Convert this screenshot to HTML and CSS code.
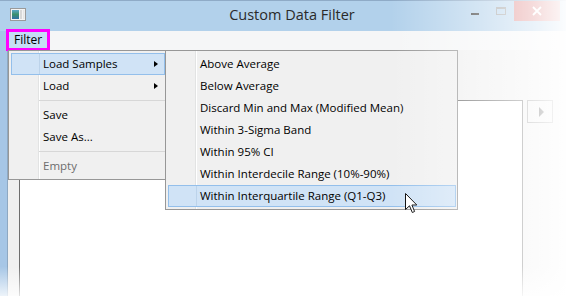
FILE: index.html
```html
<!DOCTYPE html>
<html>
<head>
<meta charset="utf-8">
<title>Custom Data Filter</title>
<link rel="stylesheet" href="styles.css">
</head>
<body>
<div class="window">
  <header class="titlebar">
    <div class="tb-left">
      <svg class="app-icon" width="16" height="13" viewBox="0 0 16 13">
        <defs>
          <linearGradient id="ig" x1="0" y1="0" x2="0" y2="1">
            <stop offset="0" stop-color="#5aa6c8"/>
            <stop offset="0.5" stop-color="#3b8f6d"/>
            <stop offset="1" stop-color="#2e6fa8"/>
          </linearGradient>
        </defs>
        <rect x="0.5" y="0.5" width="15" height="12" fill="#f4f4f4" stroke="#9a9a9a"/>
        <rect x="2" y="2" width="7" height="9" fill="url(#ig)"/>
        <rect x="10" y="2" width="2" height="9" fill="#d8d8d8"/>
        <rect x="13" y="2" width="1.5" height="9" fill="#e6e6e6"/>
      </svg>
    </div>
    <div class="title">Custom Data Filter</div>
    <div class="tb-controls">
      <span class="ctl ctl-min"><i class="min-glyph"></i></span>
      <span class="ctl ctl-max"><i class="max-glyph"></i></span>
      <span class="ctl ctl-close">
        <svg width="10" height="10" viewBox="0 0 10 10"><path d="M1 1 L9 9 M9 1 L1 9" stroke="#fff" stroke-width="1.8"/></svg>
      </span>
    </div>
  </header>
  <div class="frame">
    <div class="frame-left"></div>
    <div class="client">
      <nav class="menubar"><span class="menubar-item active">Filter</span></nav>
      <div class="content">
        <div class="listbox"></div>
        <div class="scroll-btn"><span class="tri"></span></div>
      </div>
    </div>
  </div>

  <div class="menu menu-main">
    <div class="item hl"><span>Load Samples</span><span class="arrow"></span></div>
    <div class="item"><span>Load</span><span class="arrow"></span></div>
    <div class="sep"></div>
    <div class="item"><span>Save</span></div>
    <div class="item"><span>Save As...</span></div>
    <div class="sep"></div>
    <div class="item disabled"><span>Empty</span></div>
  </div>

  <div class="menu menu-sub">
    <div class="item"><span>Above Average</span></div>
    <div class="item"><span>Below Average</span></div>
    <div class="item"><span>Discard Min and Max (Modified Mean)</span></div>
    <div class="item"><span>Within 3-Sigma Band</span></div>
    <div class="item"><span>Within 95% CI</span></div>
    <div class="item"><span>Within Interdecile Range (10%-90%)</span></div>
    <div class="item hl"><span>Within Interquartile Range (Q1-Q3)</span></div>
  </div>

  <svg class="cursor" width="13" height="21" viewBox="0 0 13 21">
    <path d="M0.5 0.5 L0.5 16.5 L4.5 12.8 L7.3 19.5 L9.6 18.5 L6.9 12 L11.8 12 Z" fill="#fff" stroke="#000" stroke-width="1" stroke-linejoin="miter"/>
  </svg>

  <div class="fade"></div>
</div>
</body>
</html>
```

FILE: styles.css
```css
* { box-sizing: border-box; }

html, body {
  margin: 0;
  padding: 0;
  background: #fff;
}

body {
  width: 566px;
  height: 296px;
  overflow: hidden;
  font-family: "Open Sans", "Noto Sans", "DejaVu Sans", sans-serif;
  font-size: 11.5px;
  color: #000;
}

.window {
  position: relative;
  width: 566px;
  height: 296px;
  display: flex;
  flex-direction: column;
  background: #a6c6e6;
}

/* ---------- title bar ---------- */
.titlebar {
  height: 31px;
  flex: none;
  display: grid;
  grid-template-columns: 1fr auto 1fr;
  background: #b2d1eb;
  border-top: 1px solid #8fabc7;
}

.tb-left {
  display: flex;
  align-items: flex-start;
  padding: 7px 0 0 10px;
}

.title {
  line-height: 28px;
  font-size: 14.5px;
  color: #2a2a2a;
  padding-left: 18px;
}

.tb-controls {
  display: flex;
  justify-content: flex-end;
  align-items: flex-start;
  padding-right: 6px;
}

.ctl {
  height: 20px;
  display: flex;
  align-items: center;
  justify-content: center;
}

.ctl-min { width: 27px; align-items: flex-start; padding-top: 12px; }
.ctl-max { width: 26px; align-items: flex-start; padding-top: 6px; }
.ctl-close { width: 46px; background: #dc7f7f; }

.min-glyph {
  display: block;
  width: 8px;
  height: 2px;
  background: #333;
}

.max-glyph {
  display: block;
  width: 10px;
  height: 8px;
  border: 1px solid #999;
  border-top-width: 2px;
}

/* ---------- frame & client ---------- */
.frame {
  flex: 1;
  display: flex;
  min-height: 0;
}

.frame-left {
  width: 8px;
  flex: none;
  background: #a6c6e6;
  border-right: 1px solid #8ea8c2;
}

.client {
  flex: 1;
  display: flex;
  flex-direction: column;
  background: #f0f0f0;
}

.menubar {
  height: 19px;
  flex: none;
  background: #f5f6f7;
  display: flex;
  align-items: flex-start;
}

.menubar-item {
  margin: 1px 0 0 1px;
  height: 16px;
  line-height: 15px;
  padding: 0 0 0 5px;
  font-size: 12px;
}

.menubar-item.active {
  background: #c6ddf4;
  outline: 3px solid #ff00ff;
  outline-offset: 0;
  width: 38px;
}

.content {
  flex: 1;
  display: flex;
  align-items: flex-start;
  padding: 50px 0 0 11px;
  min-height: 0;
}

.listbox {
  width: 504px;
  align-self: stretch;
  background: #fff;
  border: 1px solid #6e6e6e;
  border-bottom: none;
}

.scroll-btn {
  margin-left: 4px;
  width: 26px;
  height: 23px;
  background: #f2f2f2;
  border: 1px solid #999;
  display: flex;
  align-items: center;
  justify-content: center;
}

.tri {
  width: 0;
  height: 0;
  border-left: 5px solid #444;
  border-top: 5px solid transparent;
  border-bottom: 5px solid transparent;
  margin-left: 2px;
}

/* ---------- menus ---------- */
.menu {
  position: absolute;
  top: 50px;
  border: 1px solid #979797;
  padding: 2px 1px 2px 2px;
  background:
    linear-gradient(to right, transparent 29px, #e2e3e3 29px, #e2e3e3 30px, #ffffff 30px, #ffffff 31px, transparent 31px),
    #f0f0f0;
}

.menu-main { left: 8px; width: 159px; }
.menu-sub { left: 165px; width: 293px; }

.item {
  height: 22px;
  display: flex;
  align-items: center;
  padding: 0 6px 0 31px;
  border: 1px solid transparent;
  white-space: nowrap;
  line-height: 20px;
}

.item.hl {
  border-color: #93bfeb;
  background:
    linear-gradient(to right, transparent 27px, #bcd3ea 27px, #bcd3ea 28px, transparent 28px),
    #d0e3f6;
}

.item.disabled { color: #6d6d6d; }

.arrow {
  margin-left: auto;
  width: 0;
  height: 0;
  border-left: 4px solid #000;
  border-top: 3.5px solid transparent;
  border-bottom: 3.5px solid transparent;
}

.sep {
  height: 7px;
  margin-left: 28px;
  background: linear-gradient(to bottom, transparent 3px, #d7d7d7 3px, #d7d7d7 4px, transparent 4px);
}

/* ---------- cursor & fade ---------- */
.cursor {
  position: absolute;
  left: 405px;
  top: 193px;
}

.fade {
  position: absolute;
  inset: 0;
  pointer-events: none;
  background:
    linear-gradient(to right, rgba(255,255,255,0) 69%, rgba(255,255,255,.4) 83%, rgba(255,255,255,.72) 94%, rgba(255,255,255,.95) 100%),
    linear-gradient(to bottom, rgba(255,255,255,0) 90%, rgba(255,255,255,.8) 100%);
}
```
